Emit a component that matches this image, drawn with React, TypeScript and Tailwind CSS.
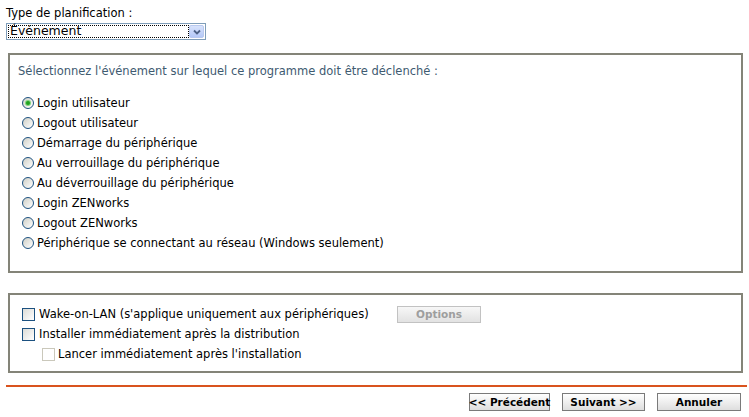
import React from "react";

const events = [
  "Login utilisateur",
  "Logout utilisateur",
  "Démarrage du périphérique",
  "Au verrouillage du périphérique",
  "Au déverrouillage du périphérique",
  "Login ZENworks",
  "Logout ZENworks",
  "Périphérique se connectant au réseau (Windows seulement)",
];

function Radio({ checked }: { checked?: boolean }) {
  return (
    <span className="relative inline-flex h-[12px] w-[12px] shrink-0 items-center justify-center rounded-full border border-[#1c5180] bg-gradient-to-br from-[#cfcfc6] to-white">
      {checked ? <span className="h-[4px] w-[4px] rounded-full bg-[#21a121] shadow-[0_0_0_1px_#7ed47e]" /> : null}
    </span>
  );
}

function Check({ disabled }: { disabled?: boolean }) {
  return disabled ? (
    <span className="inline-block h-[13px] w-[13px] shrink-0 border border-[#cac8bb] bg-white" />
  ) : (
    <span className="inline-block h-[13px] w-[13px] shrink-0 border border-[#1c5180] bg-gradient-to-br from-[#dcdcd7] to-white" />
  );
}

function Btn({ label, w }: { label: string; w: string }) {
  return (
    <button
      type="button"
      className={`${w} flex h-[18px] items-center justify-center whitespace-nowrap border border-[#7a7a7a] bg-gradient-to-b from-white to-[#dedede] text-[10.5px] font-bold leading-none text-black`}
    >
      {label}
    </button>
  );
}

export default function App() {
  return (
    <div className="h-[417px] w-[749px] overflow-hidden bg-white px-[6px] pt-[6px] font-['DejaVu_Sans',sans-serif] text-[11.5px] leading-[14px] text-black">
      <div>Type de planification :</div>

      <div className="mt-[3px] flex h-[17px] w-[200px] items-center border border-[#7f9db9] bg-white">
        <div className="ml-[1px] flex h-[13px] flex-1 items-center border border-dotted border-black pl-[1px] text-[12.5px] leading-none">
          Événement
        </div>
        <div className="mr-[1px] flex h-[13px] w-[15px] items-center justify-center rounded-[2px] border border-[#b9c9ef] bg-gradient-to-b from-[#d8e3fc] to-[#b5c8f7]">
          <svg width="8" height="6" viewBox="0 0 8 6">
            <path d="M1 1.5 L4 4.5 L7 1.5" fill="none" stroke="#4d6185" strokeWidth="1.8" />
          </svg>
        </div>
      </div>

      <section className="ml-[2px] mt-[13px] h-[220px] border-2 border-[#848478] pl-[8px] pt-[9px]">
        <p className="text-[#3e5a70]">Sélectionnez l'événement sur lequel ce programme doit être déclenché :</p>
        <ul className="mt-[15px] pl-[4px]">
          {events.map((e, i) => (
            <li key={e} className="flex h-[20px] items-center gap-[3px]">
              <Radio checked={i === 0} />
              <span>{e}</span>
            </li>
          ))}
        </ul>
      </section>

      <section className="ml-[2px] mt-[20px] h-[80px] border-2 border-[#848478] pl-[12px] pt-[9px]">
        <div className="flex h-[20px] items-center">
          <Check />
          <span className="ml-[4px] w-[358px]">Wake-on-LAN (s'applique uniquement aux périphériques)</span>
          <button
            type="button"
            className="flex h-[17px] w-[84px] items-center justify-center border border-[#c2c2c2] bg-gradient-to-b from-[#f7f7f7] to-[#e2e2e2] text-[10.5px] font-bold text-[#9e9e9e]"
          >
            Options
          </button>
        </div>
        <div className="flex h-[20px] items-center">
          <Check />
          <span className="ml-[4px]">Installer immédiatement après la distribution</span>
        </div>
        <div className="flex h-[20px] items-center pl-[20px]">
          <Check disabled />
          <span className="ml-[3px]">Lancer immédiatement après l'installation</span>
        </div>
      </section>

      <div className="mt-[12px] h-[2px] w-[741px] bg-[#d9531e]" />

      <div className="mt-[6px] flex justify-end gap-[12px] pr-[2px]">
        <Btn label="<< Précédent" w="w-[81px]" />
        <Btn label="Suivant >>" w="w-[83px]" />
        <Btn label="Annuler" w="w-[84px]" />
      </div>
    </div>
  );
}
